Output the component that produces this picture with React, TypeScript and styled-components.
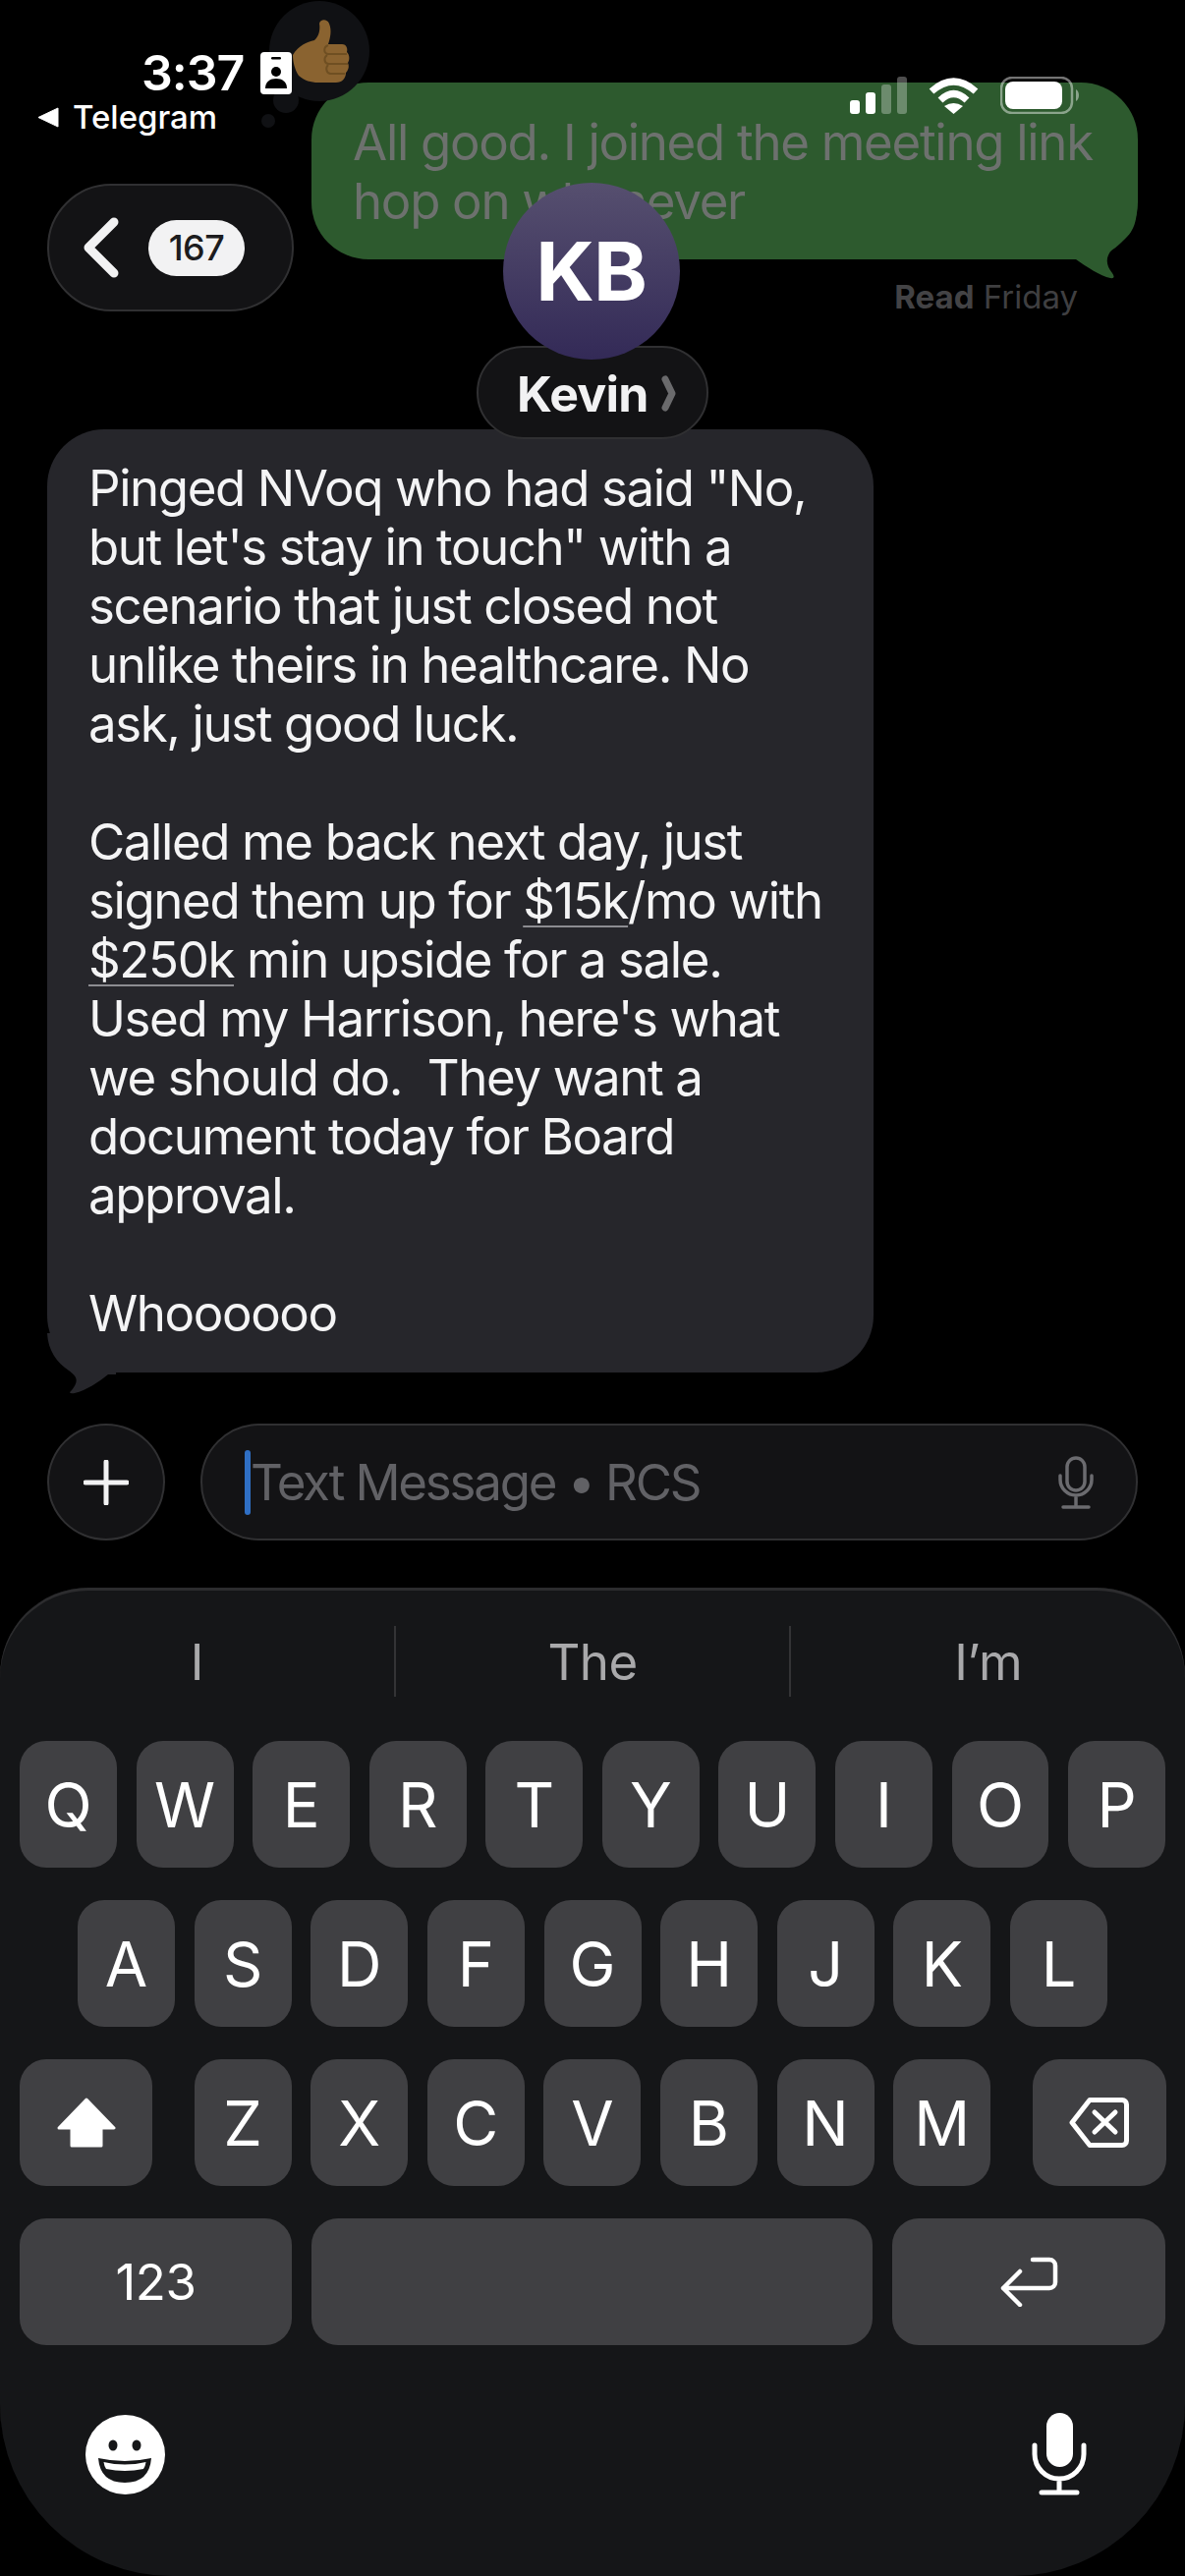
import React from "react";
import styled, { createGlobalStyle } from "styled-components";

const Global = createGlobalStyle`
  html, body { margin: 0; padding: 0; background: #000; }
  * { box-sizing: border-box; }
`;

const Screen = styled.div`
  position: relative;
  width: 1206px;
  height: 2622px;
  overflow: hidden;
  background: #000;
  color: #fff;
  display: flex;
  flex-direction: column;
  font-family: Inter, "Liberation Sans", sans-serif;
`;

const StatusBar = styled.div`
  position: absolute;
  top: 0;
  left: 0;
  right: 0;
  z-index: 5;
  display: flex;
  justify-content: space-between;
  align-items: flex-start;
  padding: 53px 106px 0 38px;
`;

const StatusLeft = styled.div`
  display: flex;
  flex-direction: column;
`;

const TimeRow = styled.div`
  display: flex;
  align-items: center;
  gap: 17px;
  margin-left: 106px;
  height: 43px;
`;

const Time = styled.span`
  font-size: 50px;
  font-weight: 600;
  letter-spacing: -1px;
  line-height: 43px;
`;

const BackApp = styled.div`
  display: flex;
  align-items: center;
  gap: 14px;
  margin-top: 3px;
  font-size: 33px;
  font-weight: 500;
  line-height: 40px;
`;

const StatusRight = styled.div`
  display: flex;
  align-items: center;
  gap: 22px;
  margin-top: 25px;
  height: 38px;
`;

const Reaction = styled.div`
  position: absolute;
  left: 274px;
  top: 1px;
  width: 102px;
  height: 102px;
  border-radius: 50%;
  background: #101114;
  display: flex;
  align-items: center;
  justify-content: center;
  &::before {
    content: "";
    position: absolute;
    left: 4px;
    top: 88px;
    width: 26px;
    height: 26px;
    border-radius: 50%;
    background: #101114;
  }
  &::after {
    content: "";
    position: absolute;
    left: -8px;
    top: 115px;
    width: 14px;
    height: 14px;
    border-radius: 50%;
    background: #101114;
  }
`;

const ThumbSvg = styled.svg`
  margin-left: 4px;
`;

const Thread = styled.div`
  display: flex;
  flex-direction: column;
  padding: 84px 48px 0;
`;

const OutBubble = styled.div`
  position: relative;
  align-self: flex-end;
  width: 841px;
  height: 180px;
  padding: 31px 20px 29px 42px;
  border-radius: 58px;
  background: #2d5a2e;
  color: #6d716e;
  font-size: 51px;
  line-height: 60px;
  letter-spacing: -1.3px;
  white-space: nowrap;
`;

const OutTail = styled.svg`
  position: absolute;
  right: 0;
  bottom: -20px;
  width: 80px;
  height: 70px;
`;

const Receipt = styled.div`
  align-self: flex-end;
  margin: 18px 61px 0 0;
  font-size: 33px;
  line-height: 40px;
  color: #3f3f41;
  b { font-weight: 700; color: #434345; }
`;

const InBubble = styled.div`
  position: relative;
  width: 841px;
  margin-top: 115px;
  padding: 30px 20px 30px 42px;
  border-radius: 58px;
  background: #26262b;
  font-size: 51px;
  line-height: 60px;
  letter-spacing: -1.4px;
  white-space: pre-wrap;
  color: #f4f4f5;
  a {
    color: inherit;
    text-decoration: underline;
    text-decoration-thickness: 2px;
    text-decoration-color: #8c8c91;
    text-underline-offset: 7px;
  }
`;

const InTail = styled.svg`
  position: absolute;
  left: 0;
  bottom: -22px;
  width: 70px;
  height: 62px;
`;

const BackPill = styled.div`
  position: absolute;
  left: 48px;
  top: 187px;
  width: 251px;
  height: 130px;
  border-radius: 65px;
  background: #131315;
  border: 2px solid #303032;
  display: flex;
  align-items: center;
  padding-left: 35px;
  gap: 26px;
`;

const CountBadge = styled.span`
  width: 98px;
  height: 57px;
  border-radius: 29px;
  background: #f2f2f3;
  color: #1c1c1e;
  display: flex;
  align-items: center;
  justify-content: center;
  font-size: 36px;
  font-weight: 500;
  letter-spacing: -0.5px;
`;

const ContactHeader = styled.div`
  position: absolute;
  left: 485px;
  top: 186px;
  width: 236px;
  display: flex;
  flex-direction: column;
  align-items: center;
`;

const Avatar = styled.div`
  position: relative;
  z-index: 1;
  margin-left: -3px;
  width: 180px;
  height: 180px;
  border-radius: 50%;
  background: linear-gradient(#564f6f, #332a57);
  display: flex;
  align-items: center;
  justify-content: center;
  font-size: 83px;
  font-weight: 700;
  letter-spacing: -1px;
`;

const NamePill = styled.div`
  width: 236px;
  height: 95px;
  margin-top: -14px;
  padding: 2px 0 0 39px;
  border-radius: 48px;
  background: #131315;
  border: 2px solid #303032;
  display: flex;
  align-items: center;
  gap: 13px;
  font-size: 50px;
  font-weight: 700;
  letter-spacing: -0.8px;
  color: #f2f2f3;
`;

const Composer = styled.div`
  display: flex;
  gap: 36px;
  margin-top: 52px;
  padding: 0 48px;
`;

const PlusButton = styled.div`
  flex: none;
  width: 120px;
  height: 119px;
  border-radius: 50%;
  background: #131315;
  border: 2px solid #303032;
  display: flex;
  align-items: center;
  justify-content: center;
`;

const Field = styled.div`
  flex: 1;
  height: 119px;
  border-radius: 60px;
  background: #131315;
  border: 2px solid #303032;
  display: flex;
  align-items: center;
  padding: 0 43px 0 43px;
`;

const Caret = styled.span`
  flex: none;
  width: 6px;
  height: 66px;
  border-radius: 3px;
  background: #2f6fc4;
`;

const Placeholder = styled.span`
  flex: 1;
  font-size: 51px;
  letter-spacing: -2.2px;
  color: #616165;
`;

const Keyboard = styled.div`
  flex: 1;
  margin-top: 48px;
  display: flex;
  flex-direction: column;
  background: #151618;
  border-radius: 90px 90px 175px 175px;
  box-shadow: inset 0 3px 0 #2c2c2e;
`;

const Suggestions = styled.div`
  display: flex;
  height: 72px;
  margin: 39px 0 45px;
`;

const Suggestion = styled.div`
  flex: 1;
  display: flex;
  align-items: center;
  justify-content: center;
  font-size: 51px;
  letter-spacing: -0.6px;
  color: #a9a9ab;
  & + & { border-left: 2px solid #333335; }
`;

const Keys = styled.div`
  display: flex;
  flex-direction: column;
  gap: 33px;
  padding: 0 20px;
`;

const KeyRow = styled.div<{ $inset?: number }>`
  display: flex;
  gap: 19.6px;
  padding: 0 ${(p) => p.$inset ?? 0}px;
`;

const Key = styled.div<{ $width?: number; $gapLeft?: number }>`
  flex: ${(p) => (p.$width ? `0 0 ${p.$width}px` : "1 1 0")};
  height: 129px;
  margin-left: ${(p) => p.$gapLeft ?? 0}px;
  border-radius: 27px;
  background: #404043;
  display: flex;
  align-items: center;
  justify-content: center;
  font-size: 63px;
  color: #fff;
`;

const NumKey = styled(Key)`
  font-size: 51px;
  letter-spacing: -0.5px;
`;

const KeyboardFoot = styled.div`
  display: flex;
  justify-content: space-between;
  align-items: center;
  margin-top: 69px;
  padding: 0 100px 0 87px;
`;

const row1 = "QWERTYUIOP".split("");
const row2 = "ASDFGHJKL".split("");
const row3 = "ZXCVBNM".split("");

const ThumbsUp = () => (
  <ThumbSvg width="58" height="66" viewBox="0 0 58 66">
    <path
      d="M0 37 C6 27 14 24 22 22 C27 18 28 10 27 5 C28 0 35 0 37 5 C40 12 38 20 36 26 L50 26 C55 26 56 31 55 34 C58 37 58 42 56 45 C58 49 56 53 54 55 C54 61 50 65 44 65 L26 65 C18 65 12 63 6 58 C2 52 0 44 0 37 Z"
      fill="#8a6330"
    />
    <path d="M36 27 C31 29 31 35 36 36 L55 36 M35 37 C31 40 32 45 36 46 L56 46 M36 47 C33 50 34 55 38 56 L53 56" fill="none" stroke="#6f4f22" strokeWidth="2" />
  </ThumbSvg>
);

const ContactCard = () => (
  <svg width="32" height="43" viewBox="0 0 32 43">
    <rect width="32" height="43" rx="4" fill="#fff" />
    <rect x="11" y="5" width="10" height="2.4" rx="1.2" fill="#000" />
    <circle cx="16" cy="20" r="5" fill="#000" />
    <path d="M5 37 C5 30 10 27 16 27 C22 27 27 30 27 37 Z" fill="#000" />
  </svg>
);

const BackTriangle = () => (
  <svg width="22" height="21" viewBox="0 0 22 21">
    <path d="M21 1 V20 L1 10.5 Z" fill="#fff" stroke="#fff" strokeLinejoin="round" />
  </svg>
);

const Signal = () => (
  <svg width="58" height="38" viewBox="0 0 58 38">
    <rect x="0" y="24" width="10" height="14" rx="3" fill="#fff" />
    <rect x="16" y="16" width="10" height="22" rx="3" fill="#fff" />
    <rect x="32" y="8" width="10" height="30" rx="3" fill="#fff" opacity=".3" />
    <rect x="48" y="0" width="10" height="38" rx="3" fill="#fff" opacity=".3" />
  </svg>
);

const Wifi = () => (
  <svg width="51" height="38" viewBox="0 0 51 38">
    <path d="M3 15 Q25.5 -5 48 15" fill="none" stroke="#fff" strokeWidth="7" />
    <path d="M12 24 Q25.5 11 39 24" fill="none" stroke="#fff" strokeWidth="7" />
    <path d="M16 30 Q25.5 24 35 30 L25.5 38 Z" fill="#fff" />
  </svg>
);

const Battery = () => (
  <svg width="82" height="38" viewBox="0 0 82 38">
    <rect x="1" y="1" width="72" height="36" rx="11" fill="none" stroke="#fff" strokeOpacity=".45" strokeWidth="2.5" />
    <rect x="5" y="5" width="58" height="28" rx="8" fill="#fff" />
    <path d="M77 13 C81 15 81 23 77 25 Z" fill="#fff" fillOpacity=".45" />
  </svg>
);

const BackChevron = () => (
  <svg width="40" height="62" viewBox="0 0 40 62">
    <path d="M31 5 L5 31 L31 57" fill="none" stroke="#f2f2f3" strokeWidth="9" strokeLinecap="round" strokeLinejoin="round" />
  </svg>
);

const NameChevron = () => (
  <svg width="15" height="37" viewBox="0 0 15 37">
    <path d="M4 4 L11 18.5 L4 33" fill="none" stroke="#6a6a6c" strokeWidth="7" strokeLinecap="round" strokeLinejoin="round" />
  </svg>
);

const Plus = () => (
  <svg width="46" height="46" viewBox="0 0 46 46">
    <path d="M23 2 V44 M2 23 H44" stroke="#f2f2f3" strokeWidth="5" strokeLinecap="round" />
  </svg>
);

const SmallMic = () => (
  <svg width="36" height="54" viewBox="0 0 36 54">
    <rect x="9" y="2" width="18" height="33" rx="9" fill="none" stroke="#6b6b6f" strokeWidth="3.5" />
    <path d="M2 20 V24 A16 16 0 0 0 34 24 V20 M18 40 V50 M5 52 H31" fill="none" stroke="#6b6b6f" strokeWidth="3.5" strokeLinecap="round" />
  </svg>
);

const ShiftIcon = () => (
  <svg width="60" height="52" viewBox="0 0 60 52">
    <path d="M30 2 L58 31 H45 V49 H15 V31 H2 Z" fill="#fff" stroke="#fff" strokeWidth="3" strokeLinejoin="round" />
  </svg>
);

const DeleteIcon = () => (
  <svg width="61" height="51" viewBox="0 0 61 51">
    <path d="M21 2.5 H54 A4.5 4.5 0 0 1 58.5 7 V44 A4.5 4.5 0 0 1 54 48.5 H21 L3 25.5 Z" fill="none" stroke="#fff" strokeWidth="5" strokeLinejoin="round" />
    <path d="M26 15 L47 35 M47 15 L26 35" stroke="#fff" strokeWidth="5" strokeLinecap="round" />
  </svg>
);

const ReturnIcon = () => (
  <svg width="59" height="51" viewBox="0 0 59 51">
    <path d="M33 3 H50 A6 6 0 0 1 56 9 V26 A6 6 0 0 1 50 32 H3 M3 32 L20 15 M3 32 L20 49" fill="none" stroke="#fff" strokeWidth="4.5" strokeLinecap="round" strokeLinejoin="round" />
  </svg>
);

const EmojiIcon = () => (
  <svg width="81" height="81" viewBox="0 0 81 81">
    <circle cx="40.5" cy="40.5" r="40.5" fill="#fff" />
    <ellipse cx="28" cy="31" rx="4.5" ry="5.5" fill="#151618" />
    <ellipse cx="52" cy="31" rx="4.5" ry="5.5" fill="#151618" />
    <path d="M13 44 Q40 50 67 44 Q65 69 40 69 Q15 69 13 44 Z" fill="#151618" />
    <path d="M18.5 48 Q40 53 61.5 48 Q61 52 59 55 Q40 59 21 55 Q19 52 18.5 48 Z" fill="#fff" />
  </svg>
);

const BigMic = () => (
  <svg width="56" height="84" viewBox="0 0 56 84">
    <rect x="15" y="0" width="27" height="55" rx="13.5" fill="#fff" />
    <path d="M3 33 V42 A25 25 0 0 0 53 42 V33 M28 67 V80 M10 81 H46" fill="none" stroke="#fff" strokeWidth="5" strokeLinecap="round" />
  </svg>
);

export default function App() {
  return (
    <Screen>
      <Global />
      <Thread>
        <OutBubble>
          {"All good. I joined the meeting link\nhop on whenever".split("\n").map((l) => (
            <div key={l}>{l}</div>
          ))}
          <OutTail viewBox="0 0 80 70">
            <path d="M0 50 H17 C27 57 42 67 52 69 Q58 70 54 64 C46 54 47 45 58 36 C66 30 78 24 79 0 H0 Z" fill="#2d5a2e" />
          </OutTail>
        </OutBubble>
        <Receipt>
          <b>Read</b> Friday
        </Receipt>
        <InBubble>
          {`Pinged NVoq who had said "No,
but let's stay in touch" with a
scenario that just closed not
unlike theirs in healthcare. No
ask, just good luck.

Called me back next day, just
signed them up for `}
          <a>$15k</a>
          {`/mo with
`}
          <a>$250k</a>
          {` min upside for a sale.
Used my Harrison, here's what
we should do.  They want a
document today for Board
approval.

Whoooooo`}
          <InTail viewBox="0 0 70 62">
            <path d="M0 0 C1 18 10 30 22 38 C30 44 33 48 25 58 Q20 62 28 61 C40 58 52 50 62 42 H70 V0 Z" fill="#26262b" />
          </InTail>
        </InBubble>
      </Thread>

      <Composer>
        <PlusButton>
          <Plus />
        </PlusButton>
        <Field>
          <Caret />
          <Placeholder>Text Message • RCS</Placeholder>
          <SmallMic />
        </Field>
      </Composer>

      <Keyboard>
        <Suggestions>
          <Suggestion>I</Suggestion>
          <Suggestion>The</Suggestion>
          <Suggestion>I’m</Suggestion>
        </Suggestions>
        <Keys>
          <KeyRow>
            {row1.map((k) => (
              <Key key={k}>{k}</Key>
            ))}
          </KeyRow>
          <KeyRow $inset={59}>
            {row2.map((k) => (
              <Key key={k}>{k}</Key>
            ))}
          </KeyRow>
          <KeyRow>
            <Key $width={135}>
              <ShiftIcon />
            </Key>
            <Key $width={99} $gapLeft={23}>Z</Key>
            {row3.slice(1).map((k) => (
              <Key key={k} $width={99}>{k}</Key>
            ))}
            <Key $width={136} $gapLeft={23}>
              <DeleteIcon />
            </Key>
          </KeyRow>
          <KeyRow>
            <NumKey $width={277}>123</NumKey>
            <Key />
            <Key $width={278}>
              <ReturnIcon />
            </Key>
          </KeyRow>
        </Keys>
        <KeyboardFoot>
          <EmojiIcon />
          <BigMic />
        </KeyboardFoot>
      </Keyboard>

      <Reaction>
        <ThumbsUp />
      </Reaction>

      <StatusBar>
        <StatusLeft>
          <TimeRow>
            <Time>3:37</Time>
            <ContactCard />
          </TimeRow>
          <BackApp>
            <BackTriangle />
            Telegram
          </BackApp>
        </StatusLeft>
        <StatusRight>
          <Signal />
          <Wifi />
          <Battery />
        </StatusRight>
      </StatusBar>

      <BackPill>
        <BackChevron />
        <CountBadge>167</CountBadge>
      </BackPill>

      <ContactHeader>
        <Avatar>KB</Avatar>
        <NamePill>
          Kevin
          <NameChevron />
        </NamePill>
      </ContactHeader>
    </Screen>
  );
}
